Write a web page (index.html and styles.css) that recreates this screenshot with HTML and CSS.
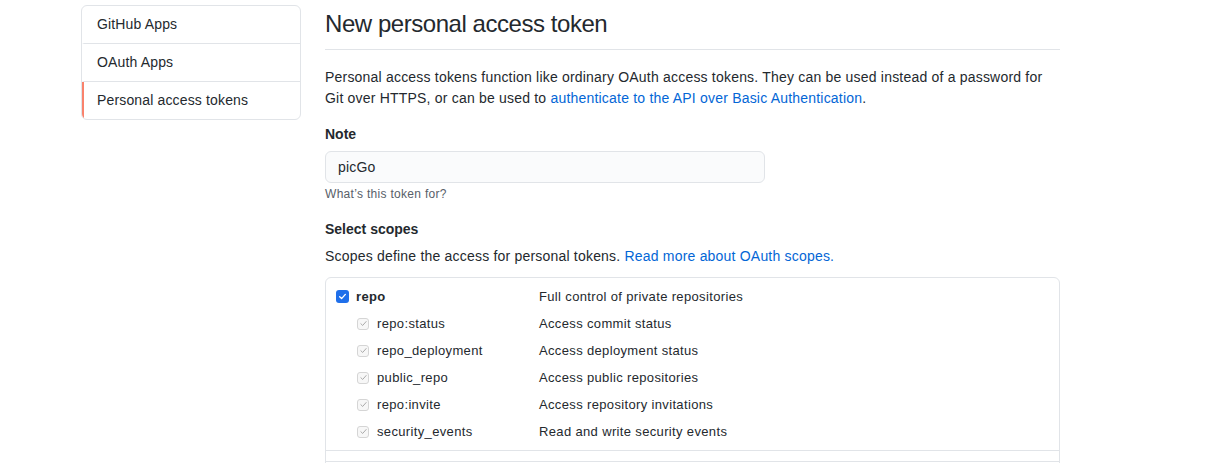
FILE: index.html
```html
<!DOCTYPE html>
<html lang="en">
<head>
<meta charset="utf-8">
<title>New personal access token</title>
<link rel="stylesheet" href="styles.css">
</head>
<body>
<div class="layout">
  <nav class="menu">
    <a class="menu-item">GitHub Apps</a>
    <a class="menu-item">OAuth Apps</a>
    <a class="menu-item selected">Personal access tokens</a>
  </nav>
  <main class="main">
    <div class="subhead"><h2 class="subhead-heading">New personal access token</h2></div>
    <p class="intro">Personal access tokens function like ordinary OAuth access tokens. They can be used instead of a password for Git over HTTPS, or can be used to <a class="link">authenticate to the API over Basic Authentication</a>.</p>
    <div class="form-group">
      <div class="label">Note</div>
      <div class="input">picGo</div>
      <div class="note">What’s this token for?</div>
    </div>
    <div class="form-group scopes-group">
      <div class="label">Select scopes</div>
      <p class="scopes-desc">Scopes define the access for personal tokens. <a class="link">Read more about OAuth scopes.</a></p>
      <div class="scopes">
        <div class="scope-group">
          <div class="row parent">
            <span class="name"><span class="cb cb-on"><svg viewBox="0 0 12 12" width="9" height="9"><path d="M2.2 6.3 L4.8 8.8 L9.8 3.2" fill="none" stroke="#fff" stroke-width="1.8" stroke-linecap="round" stroke-linejoin="round"/></svg></span><b>repo</b></span>
            <span class="desc">Full control of private repositories</span>
          </div>
          <div class="row child">
            <span class="name"><span class="cb cb-dis"><svg viewBox="0 0 12 12" width="9" height="9"><path d="M2.5 6.3 L4.9 8.6 L9.5 3.4" fill="none" stroke="#a8a8a8" stroke-width="1.3" stroke-linecap="round" stroke-linejoin="round"/></svg></span>repo:status</span>
            <span class="desc">Access commit status</span>
          </div>
          <div class="row child">
            <span class="name"><span class="cb cb-dis"><svg viewBox="0 0 12 12" width="9" height="9"><path d="M2.5 6.3 L4.9 8.6 L9.5 3.4" fill="none" stroke="#a8a8a8" stroke-width="1.3" stroke-linecap="round" stroke-linejoin="round"/></svg></span>repo_deployment</span>
            <span class="desc">Access deployment status</span>
          </div>
          <div class="row child">
            <span class="name"><span class="cb cb-dis"><svg viewBox="0 0 12 12" width="9" height="9"><path d="M2.5 6.3 L4.9 8.6 L9.5 3.4" fill="none" stroke="#a8a8a8" stroke-width="1.3" stroke-linecap="round" stroke-linejoin="round"/></svg></span>public_repo</span>
            <span class="desc">Access public repositories</span>
          </div>
          <div class="row child">
            <span class="name"><span class="cb cb-dis"><svg viewBox="0 0 12 12" width="9" height="9"><path d="M2.5 6.3 L4.9 8.6 L9.5 3.4" fill="none" stroke="#a8a8a8" stroke-width="1.3" stroke-linecap="round" stroke-linejoin="round"/></svg></span>repo:invite</span>
            <span class="desc">Access repository invitations</span>
          </div>
          <div class="row child">
            <span class="name"><span class="cb cb-dis"><svg viewBox="0 0 12 12" width="9" height="9"><path d="M2.5 6.3 L4.9 8.6 L9.5 3.4" fill="none" stroke="#a8a8a8" stroke-width="1.3" stroke-linecap="round" stroke-linejoin="round"/></svg></span>security_events</span>
            <span class="desc">Read and write security events</span>
          </div>
        </div>
        <div class="scope-group next"></div>
      </div>
    </div>
  </main>
</div>
</body>
</html>
```
FILE: styles.css
```css
* { box-sizing: border-box; }
html, body { margin: 0; background: #fff; }
body {
  font-family: "Liberation Sans", Arial, sans-serif;
  font-size: 14px;
  line-height: 21px;
  color: #24292e;
  height: 463px;
  overflow: hidden;
}
.layout {
  display: flex;
  gap: 24px;
  padding: 6px 0 0 81px;
}
.menu {
  width: 220px;
  flex: none;
  align-self: flex-start;
  margin-top: -1px;
  border: 1px solid #e1e4e8;
  border-radius: 6px;
  display: flex;
  flex-direction: column;
  overflow: hidden;
}
.menu-item {
  display: block;
  padding: 8px 13px;
  color: #24292e;
  letter-spacing: 0.15px;
  border-bottom: 1px solid #e1e4e8;
  border-left: 2px solid transparent;
}
.menu-item:last-child { border-bottom: 0; }
.menu-item.selected { border-left-color: #f9826c; }
.main { width: 735px; flex: none; }
.subhead {
  padding-bottom: 7px;
  margin-bottom: 17px;
  border-bottom: 1px solid #e1e4e8;
}
.subhead-heading {
  margin: 0;
  font-size: 24px;
  line-height: 36px;
  font-weight: 400;
  letter-spacing: -0.45px;
}
.intro { margin: 0 0 15px; letter-spacing: 0.2px; }
.link { color: #0366d6; text-decoration: none; }
.form-group { margin: 0; }
.label { font-weight: 700; margin-bottom: 6px; }
.input {
  width: 440px;
  height: 32px;
  padding: 5px 12px;
  background: #fafbfc;
  border: 1px solid #e1e4e8;
  border-radius: 6px;
  font-size: 14px;
  line-height: 20px;
  letter-spacing: 0.2px;
}
.note {
  font-size: 12px;
  line-height: 17px;
  color: #586069;
  margin-top: 3px;
  letter-spacing: 0.3px;
}
.scopes-group { margin-top: 16px; }
.scopes-desc { margin: 1px 0 10px; letter-spacing: 0.2px; }
.scopes {
  border: 1px solid #e1e4e8;
  border-radius: 6px;
  height: 200px;
}
.scope-group { padding: 5px 0; border-bottom: 1px solid #e1e4e8; }
.row {
  display: flex;
  align-items: center;
  height: 27px;
  font-size: 13px;
  letter-spacing: 0.35px;
}
.name { display: flex; align-items: center; width: 213px; flex: none; padding-left: 10px; }
.row.child .name { padding-left: 31px; }
.desc { color: #24292e; }
.cb {
  display: inline-flex;
  align-items: center;
  justify-content: center;
  flex: none;
}
.cb-on {
  width: 13px; height: 13px;
  background: #1f6fea;
  border-radius: 3px;
  margin-right: 7px;
}
.cb-dis {
  width: 12px; height: 12px;
  background: #f7f7f7;
  border: 1px solid #d5d5d5;
  border-radius: 3px;
  margin-right: 8px;
}
```
